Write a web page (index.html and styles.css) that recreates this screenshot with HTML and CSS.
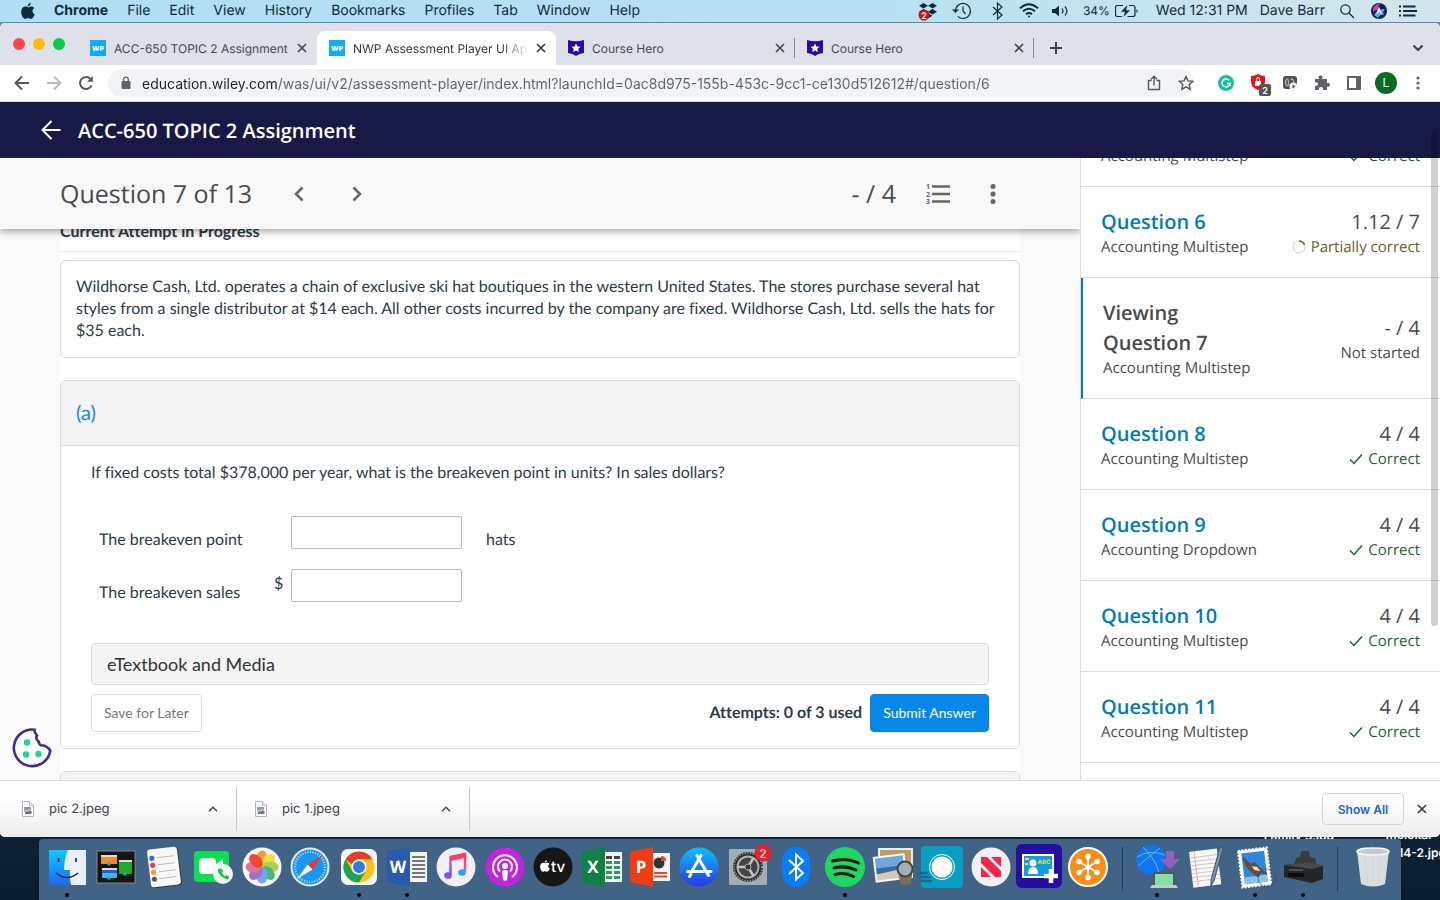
FILE: index.html
```html
<!DOCTYPE html>
<html lang="en">
  <head>
    <meta charset="utf-8">
    <title>ACC-650 TOPIC 2 Assignment</title>
    <link rel="stylesheet" href="styles.css">
  </head>
  <body>
    <!-- shared icons -->
    <svg class="sprite" aria-hidden="true">
      <symbol id="close" viewBox="0 0 10 10"><path d="M1 1l8 8M9 1l-8 8" stroke="currentColor" stroke-width="1.7" fill="none"/></symbol>
      <symbol id="check" viewBox="0 0 14 12"><path d="M1 6.5l4 4L13 1.5" stroke="currentColor" stroke-width="1.5" fill="none"/></symbol>
      <symbol id="hero" viewBox="0 0 16 16"><path fill="#2b0b9c" d="M0 0q8 2.4 16 0v13q-5 .6-8 3-3-2.400-8-3z"/><path fill="#fff" d="M8 3.600l1.400 2.800 3.100.4-2.300 2.200.6 3.100L8 10.600l-2.800 1.500.6-3.100-2.300-2.200 3.100-.4z"/></symbol>
      <symbol id="caret" viewBox="0 0 10 6"><path d="M1 5.200l4-4 4 4" stroke="currentColor" stroke-width="1.400" fill="none"/></symbol>
      <symbol id="jpeg" viewBox="0 0 12 16"><path d="M.5.500h7l4 4v11H.5z" fill="#fff" stroke="#b4b4b4"/><path d="M7.500.500v4h4" fill="#eee" stroke="#b4b4b4"/><path d="M2 6h7v5H2z" fill="#7d9ac8"/><path d="M2 9l7-1v3H2z" fill="#c9b79b"/><circle cx="8" cy="11.500" r="1.800" fill="#777"/><path d="M3 11h4v2H3z" fill="#5570a8"/></symbol>
      <symbol id="apple" viewBox="0 0 14 16"><path d="M9.700 0c.1 1.700-1.300 3.300-3 3.300C6.500 1.700 8 .1 9.700 0zM7.200 4.300c.8 0 1.600-.8 3.100-.8 1.200 0 2.300.7 3 1.600-2.600 1.500-2.200 5.200.5 6.200-.7 1.900-2.200 4.600-3.800 4.600-1.100 0-1.500-.7-2.900-.7s-1.800.7-2.900.7C2.200 15.900.2 12.300.2 9c0-3.300 2-5.400 4.200-5.400 1.200 0 2.100.7 2.800.7z" fill="currentColor"/></symbol>
    </svg>

    <div class="desktop">
      <header class="menubar">
        <nav class="menus">
          <svg class="apple" width="14" height="16"><use href="#apple"/></svg>
          <b>Chrome</b><span>File</span><span>Edit</span><span>View</span><span>History</span><span>Bookmarks</span><span>Profiles</span><span>Tab</span><span>Window</span><span>Help</span>
        </nav>
        <div class="status">
          <svg width="22" height="22" viewBox="0 0 22 22"><path d="M6.500 3l4.500 2.800-4.500 2.800L2 5.800zM15.500 3L20 5.800l-4.500 2.800L11 5.800zM15.500 9l4.500 2.800-4.500 2.800-4.500-2.800zM6.500 9l4.500 2.800-4.500 2.800L2 11.800zM11 13l4.500 2.700L11 18.500z"/><circle cx="7" cy="15" r="5.500" fill="#c3121c"/><text x="7" y="18.500" class="badge-text">2</text></svg>
          <svg width="24" height="22" viewBox="0 0 24 22" class="line"><path d="M4.500 11a7.500 7.500 0 1 1 2.200 5.300"/><path d="M12 6.500V11l2.500 3"/><path class="solid" d="M1 9.500h7L4.500 13z"/></svg>
          <svg width="20" height="22" viewBox="0 0 20 22" class="line"><path d="M6 7l9 8-4.500 4V3L15 7l-9 8"/></svg>
          <svg width="20" height="22" viewBox="0 0 20 22" class="line thick"><path d="M1 8.200q9-8 18 0M4 11.300q6-5.200 12 0M7 14.200q3-2.400 6 0"/><circle class="solid" cx="10" cy="16.500" r="1"/></svg>
          <svg width="20" height="22" viewBox="0 0 20 22" class="line"><path class="solid" d="M1 9h3l4-3.500v11L4 13H1z"/><path d="M11 8.500q2 2.500 0 5M14 6.500q3.800 4.500 0 9"/></svg>
          <span class="battery">34%<svg width="29" height="22" viewBox="0 0 29 22" class="line"><path d="M8 5.500H2.500q-2 0-2 2v7q0 2 2 2H7M14 5.500h4q2 0 2 2v7q0 2-2 2h-5.500"/><path class="solid" d="M12.500 5l-6.500 6.700h4L8.500 17l6.500-6.700h-4z"/><path class="solid" d="M21.500 9q2.500 2 0 4z"/></svg></span>
          <span>Wed 12:31 PM</span>
          <span>Dave Barr</span>
          <svg width="22" height="22" viewBox="0 0 22 22" class="line"><circle cx="8.500" cy="9.500" r="4.700"/><path d="M12 13l5 5"/></svg>
          <svg width="16" height="22" viewBox="0 0 16 22"><circle cx="8" cy="11" r="8" fill="#1b1b4b"/><path d="M2 8q3-5 9-4.500-5 1-4 7-3-1-5 1.500z" fill="#d13cb0"/><path d="M3 15q4-7 11-6-3 3-1 6-4-1-6 3z" fill="#3fb6e8"/><path d="M8 6.500l3 8-3-2.500-3 2.500z" fill="#e9f4ff"/></svg>
          <svg width="18" height="22" viewBox="0 0 18 22" class="line thick"><path d="M0 6.500h2M0 11h2M0 15.500h2M4 6.500h12.500M4 11h14M4 15.500h12.500"/></svg>
        </div>
      </header>

      <span class="file-label file-family">Family 5.jpg</span>
      <span class="file-label file-molokai">molokai-<br>04-14-2.jpg</span>

      <div class="browser">
        <div class="tabstrip">
          <div class="lights"><i class="red"></i><i class="yellow"></i><i class="green"></i></div>
          <div class="tab">
            <span class="wp">WP</span><span class="tab-title">ACC-650 TOPIC 2 Assignment</span>
            <button class="tab-close" aria-label="Close tab"><svg width="10" height="10"><use href="#close"/></svg></button>
          </div>
          <div class="tab active">
            <span class="wp">WP</span><span class="tab-title">NWP Assessment Player UI Application</span>
            <button class="tab-close" aria-label="Close tab"><svg width="10" height="10"><use href="#close"/></svg></button>
          </div>
          <div class="tab divided">
            <svg width="16" height="16"><use href="#hero"/></svg><span class="tab-title">Course Hero</span>
            <button class="tab-close" aria-label="Close tab"><svg width="10" height="10"><use href="#close"/></svg></button>
          </div>
          <div class="tab divided">
            <svg width="16" height="16"><use href="#hero"/></svg><span class="tab-title">Course Hero</span>
            <button class="tab-close" aria-label="Close tab"><svg width="10" height="10"><use href="#close"/></svg></button>
          </div>
          <button class="new-tab" aria-label="New tab"><svg width="12" height="12" viewBox="0 0 12 12"><path d="M6 0v12M0 6h12" stroke="#3c4043" stroke-width="2"/></svg></button>
          <button class="tab-search" aria-label="Search tabs"><svg width="12" height="8" viewBox="0 0 12 8"><path d="M1.500 1.500L6 6l4.500-4.500" stroke="#3c4043" stroke-width="2" fill="none"/></svg></button>
        </div>

        <div class="toolbar">
          <button aria-label="Back"><svg width="16" height="16" viewBox="0 0 16 16" class="tool"><path d="M15 8H2M8 1.500L1.500 8 8 14.500"/></svg></button>
          <button aria-label="Forward"><svg width="16" height="16" viewBox="0 0 16 16" class="tool off"><path d="M1 8h13M8 1.500L14.500 8 8 14.500"/></svg></button>
          <button aria-label="Reload"><svg width="16" height="16" viewBox="0 0 16 16" class="tool"><path d="M13.500 10.500A6 6 0 1 1 12.500 4"/><path d="M14.800 1v5.800H9z" class="fill"/></svg></button>
          <div class="omnibox">
            <svg width="12" height="14" viewBox="0 0 12 14"><path d="M2 5.500h8v7H2z" fill="#5f6368" stroke="#5f6368" stroke-linejoin="round"/><path d="M3.700 6V3.500a2.300 2.300 0 0 1 4.600 0V6" fill="none" stroke="#5f6368" stroke-width="1.300"/></svg>
            <input type="text" aria-label="Address" value="education.wiley.com/was/ui/v2/assessment-player/index.html?launchId=0ac8d975-155b-453c-9cc1-ce130d512612#/question/6">
            <button aria-label="Share"><svg width="14" height="16" viewBox="0 0 14 16" class="tool thin"><path d="M4.500 5.500h-3v9h11v-9h-3M7 10.500V1.500M4 4.300l3-3 3 3"/></svg></button>
            <button aria-label="Bookmark"><svg width="16" height="16" viewBox="0 0 16 16" class="tool thin"><path d="M8 1.500l2 4.400 4.700.5-3.500 3.200 1 4.700L8 11.900l-4.200 2.400 1-4.700L1.300 6.400 6 5.900z"/></svg></button>
          </div>
          <button aria-label="Grammarly"><svg width="16" height="16" viewBox="0 0 16 16"><circle cx="8" cy="8" r="8" fill="#15c39a"/><path d="M11 5.200A4 4 0 1 0 12 8.500H9M12 8.500v2.500" stroke="#fff" stroke-width="1.500" fill="none"/></svg></button>
          <button aria-label="Ad blocker"><svg width="26" height="26" viewBox="0 0 26 26"><path d="M6 6q4 0 7-2 3 2 7 2v6q0 5-7 8-7-3-7-8z" fill="#f40d12"/><path d="M10 11h6v5h-6z" fill="#fff"/><path d="M11.500 11V9a1.500 1.500 0 0 1 3 0v2" stroke="#fff" fill="none"/><rect x="14" y="14" width="12" height="12" rx="2" fill="#555"/><text x="20" y="23.500" class="badge-text">2</text></svg></button>
          <button aria-label="Recorder"><svg width="16" height="16" viewBox="0 0 16 16"><rect x="1" y="1" width="14" height="13" rx="3" fill="#4d4f52"/><path d="M3.500 9V6q2-4 3 0v4q-2 2-3-1M8.500 4q4 0 3 4" stroke="#aaa" stroke-width="1.500" fill="none"/><circle cx="11.500" cy="11.500" r="4" fill="#f5f5f5"/><path d="M10.500 9.500l3 2-3 2z" fill="#555"/></svg></button>
          <button aria-label="Extensions"><svg width="16" height="16" viewBox="0 0 16 16"><path d="M1 4h4q-1.500-3.500 1.500-3.500T8.200 4H13v4q3-.8 3 1.700T13 11.500V15H9q.5-3-2-3t-2 3H1v-4q3 .4 3-1.900T1 7.500z" fill="#5f6368"/></svg></button>
          <button aria-label="Side panel"><svg width="14" height="14" viewBox="0 0 14 14"><path d="M1 1h12v12H1z" fill="none" stroke="#5f6368" stroke-width="2"/><path d="M9 1h4v12H9z" fill="#5f6368"/></svg></button>
          <button aria-label="Profile"><span class="avatar">L</span></button>
          <button aria-label="Menu"><svg width="4" height="14" viewBox="0 0 4 14" fill="#5f6368"><circle cx="2" cy="2" r="1.600"/><circle cx="2" cy="7" r="1.600"/><circle cx="2" cy="12" r="1.600"/></svg></button>
        </div>

        <div class="app">
          <header class="app-header">
            <a href="#" aria-label="Back to course"><svg width="20" height="20" viewBox="0 0 20 20"><path d="M19.500 10H2M10.500 1L1.500 10l9 9" stroke="#fff" stroke-width="2" fill="none"/></svg></a>
            <h1>ACC-650 TOPIC 2 Assignment</h1>
          </header>
          <div class="scrollbar"></div>

          <div class="player">
            <main>
              <div class="question-bar">
                <h2>Question 7 of 13</h2>
                <button aria-label="Previous question"><svg width="10" height="16" viewBox="0 0 10 16"><path d="M8.500 1.500L2 8l6.500 6.500"/></svg></button>
                <button aria-label="Next question"><svg width="10" height="16" viewBox="0 0 10 16"><path d="M1.500 1.500L8 8l-6.500 6.500"/></svg></button>
                <span class="points">- / 4</span>
                <button aria-label="Question list"><svg width="26" height="24" viewBox="0 0 26 24"><path d="M7 4.500h18M7 12h18M7 19.500h18"/><g class="digits"><text x="1" y="7">1</text><text x="1" y="15">2</text><text x="1" y="22">3</text></g></svg></button>
                <button aria-label="More options"><svg width="6" height="22" viewBox="0 0 6 22" class="dots"><circle cx="3" cy="3.500" r="2.500"/><circle cx="3" cy="11" r="2.500"/><circle cx="3" cy="18.500" r="2.500"/></svg></button>
              </div>

              <div class="content">
                <h3>Current Attempt in Progress</h3>
                <div class="card prompt">Wildhorse Cash, Ltd. operates a chain of exclusive ski hat boutiques in the western United States. The stores purchase several hat styles from a single distributor at $14 each. All other costs incurred by the company are fixed. Wildhorse Cash, Ltd. sells the hats for $35 each.</div>
                <section class="card">
                  <div class="part-title">(a)</div>
                  <div class="part-body">
                    <p>If fixed costs total $378,000 per year, what is the breakeven point in units? In sales dollars?</p>
                    <div class="answers">
                      <label for="units">The breakeven point</label><span></span>
                      <input id="units" type="text"><span class="unit">hats</span>
                      <label for="sales">The breakeven sales</label><span class="dollar">$</span>
                      <input id="sales" type="text">
                    </div>
                    <button class="etext">eTextbook and Media</button>
                    <div class="actions">
                      <button class="save">Save for Later</button>
                      <span>Attempts: 0 of 3 used</span>
                      <button class="submit">Submit Answer</button>
                    </div>
                  </div>
                </section>
                <section class="card"><div class="part-title"></div></section>
              </div>
              <button class="cookie" aria-label="Cookie settings"><svg width="40" height="40" viewBox="0 0 40 40"><path d="M22.500 1.700A18.300 18.300 0 1 0 38.300 22.500Q35 18 31 17.500q-3.500.5-4.500-4-3.500-3-1.500-6-3-3-2.500-5.800z" fill="#fff" stroke="#472d83" stroke-width="2.600"/><g fill="#15d995"><circle cx="15" cy="14.500" r="3.200"/><circle cx="14" cy="26.500" r="3.200"/><circle cx="26.500" cy="26" r="3.200"/></g></svg></button>
            </main>

            <aside>
              <ul>
                <li><div><a href="#">Question 5</a><small>Accounting Multistep</small></div><div class="score">4 / 4<small class="correct"><svg width="14" height="12"><use href="#check"/></svg>Correct</small></div></li>
                <li><div><a href="#">Question 6</a><small>Accounting Multistep</small></div><div class="score">1.12 / 7<small class="partial"><svg width="14" height="14" viewBox="0 0 14 14"><circle cx="7" cy="7" r="6" fill="none" stroke="#d6d0b8"/><path d="M7 1a6 6 0 0 1 5.500 4" fill="none" stroke="#7a6428" stroke-width="1.500"/></svg>Partially correct</small></div></li>
                <li class="current"><div><strong>Viewing<br>Question 7</strong><small>Accounting Multistep</small></div><div class="score">- / 4<small>Not started</small></div></li>
                <li><div><a href="#">Question 8</a><small>Accounting Multistep</small></div><div class="score">4 / 4<small class="correct"><svg width="14" height="12"><use href="#check"/></svg>Correct</small></div></li>
                <li><div><a href="#">Question 9</a><small>Accounting Dropdown</small></div><div class="score">4 / 4<small class="correct"><svg width="14" height="12"><use href="#check"/></svg>Correct</small></div></li>
                <li><div><a href="#">Question 10</a><small>Accounting Multistep</small></div><div class="score">4 / 4<small class="correct"><svg width="14" height="12"><use href="#check"/></svg>Correct</small></div></li>
                <li><div><a href="#">Question 11</a><small>Accounting Multistep</small></div><div class="score">4 / 4<small class="correct"><svg width="14" height="12"><use href="#check"/></svg>Correct</small></div></li>
              </ul>
            </aside>
          </div>
        </div>

        <div class="downloads">
          <div class="download"><svg width="12" height="16"><use href="#jpeg"/></svg><span>pic 2.jpeg</span><button aria-label="Options for pic 2.jpeg"><svg width="10" height="6"><use href="#caret"/></svg></button></div>
          <div class="download"><svg width="12" height="16"><use href="#jpeg"/></svg><span>pic 1.jpeg</span><button aria-label="Options for pic 1.jpeg"><svg width="10" height="6"><use href="#caret"/></svg></button></div>
          <button class="show-all">Show All</button>
          <button class="shelf-close" aria-label="Close"><svg width="10" height="10"><use href="#close"/></svg></button>
        </div>
      </div>

      <footer class="dock">
        <!-- Finder -->
        <div class="dock-item running"><svg viewBox="0 0 48 48"><defs><linearGradient id="finder" x2="0" y2="1"><stop stop-color="#12c8fb"/><stop offset="1" stop-color="#1a6bf5"/></linearGradient></defs><path d="M6 7h37v35H6z" fill="#e9f0f8"/><path d="M6 7h19q-4 9-4 20h6q-1 7 1 15H6z" fill="url(#finder)"/><path d="M15.500 15v4M33 15v4M13 30q11 9 22 0" stroke="#132238" stroke-width="1.600" fill="none"/></svg></div>
        <!-- Mission Control -->
        <div class="dock-item"><svg viewBox="0 0 48 48"><path d="M5 8h38v32H5z" fill="#151515" stroke="#888"/><path d="M9 12h16v9H9z" fill="#f18a2b"/><path d="M27 17h13v14H27z" fill="#1eab2c"/><path d="M10 25h15v10H10z" fill="#3c50d8"/><path d="M10 30h15v5H10z" fill="#35c0d8"/><path d="M9 12h16v2H9zM27 17h13v2H27zM10 25h15v2H10z" fill="#ddd"/><g fill="#2c9bf0"><circle cx="17" cy="21" r="1.800"/><circle cx="33" cy="31" r="1.800"/><circle cx="17" cy="35" r="1.800"/></g></svg></div>
        <!-- Reminders -->
        <div class="dock-item"><svg viewBox="0 0 48 48"><g transform="rotate(-7 24 24)"><rect x="10" y="6" width="30" height="38" rx="3" fill="#333"/><rect x="9" y="5" width="30" height="38" rx="3" fill="#f8f8f8"/><path d="M18 14h17M18 21h17M18 28h17M18 35h17" stroke="#bbb"/><circle cx="13" cy="14" r="2.600" fill="#2d65e8"/><circle cx="13" cy="21" r="2.600" fill="#f3392f"/><circle cx="13" cy="28" r="2.600" fill="#f99a1c"/><circle cx="13" cy="35" r="2.600" fill="#555d66"/></g></svg></div>
        <!-- FaceTime -->
        <div class="dock-item"><svg viewBox="0 0 48 48"><rect x="5" y="8" width="35" height="31" rx="4" fill="#0be052"/><rect x="10" y="15" width="17" height="16" rx="4" fill="#fff"/><path d="M27 21l7-5v14l-7-5z" fill="#fff"/><circle cx="34" cy="31" r="10" fill="#f3f3f3"/><path d="M29 26q-1 3 3 7t7 3l1.500-2-3-2-1.500 1.200q-2-1-3-3.200l1.200-1.500-2-3z" fill="#0fc84b"/></svg></div>
        <!-- Photos -->
        <div class="dock-item"><svg viewBox="0 0 48 48"><circle cx="24" cy="24" r="19.500" fill="#f6f6f6"/><g opacity=".9"><ellipse cx="24" cy="15.500" rx="5.500" ry="8" fill="#f8931b"/><ellipse cx="24" cy="15.500" rx="5.500" ry="8" fill="#efe223" transform="rotate(45 24 24)"/><ellipse cx="24" cy="15.500" rx="5.500" ry="8" fill="#a0cc40" transform="rotate(90 24 24)"/><ellipse cx="24" cy="15.500" rx="5.500" ry="8" fill="#3cb070" transform="rotate(135 24 24)"/><ellipse cx="24" cy="15.500" rx="5.500" ry="8" fill="#60a0e4" transform="rotate(180 24 24)"/><ellipse cx="24" cy="15.500" rx="5.500" ry="8" fill="#9068c4" transform="rotate(225 24 24)"/><ellipse cx="24" cy="15.500" rx="5.500" ry="8" fill="#dd6590" transform="rotate(270 24 24)"/><ellipse cx="24" cy="15.500" rx="5.500" ry="8" fill="#f0391d" transform="rotate(315 24 24)"/></g></svg></div>
        <!-- Safari -->
        <div class="dock-item"><svg viewBox="0 0 48 48"><circle cx="24" cy="24" r="19.500" fill="#eee"/><circle cx="24" cy="24" r="17.500" fill="#1b95f0"/><circle cx="24" cy="24" r="15" fill="none" stroke="#b8e2ff" stroke-width="2.500" stroke-dasharray="1 1.600"/><path d="M37 12L21.500 21.500l5 5z" fill="#f0352e"/><path d="M11 36l10.500-14.500 5 5z" fill="#f5f5f5"/></svg></div>
        <!-- Chrome -->
        <div class="dock-item running"><svg viewBox="0 0 48 48"><rect x="6" y="6" width="36" height="36" rx="7" fill="#f7f7f7"/><circle cx="24" cy="24" r="15.500" fill="#fbc116"/><path d="M10.600 16.200A15.500 15.500 0 0 1 37.400 16.200H24q-5 0-7 5z" fill="#e33b2e"/><path d="M10.600 16.200A15.500 15.500 0 0 0 24 39.500l6.800-11.600q-3.500 4-8 3.800-4.800-.8-6.300-5.200z" fill="#1da453"/><circle cx="24" cy="24" r="7.600" fill="#fff"/><circle cx="24" cy="24" r="6" fill="#3478e8"/></svg></div>
        <!-- Word -->
        <div class="dock-item running"><svg viewBox="0 0 48 48"><path d="M25 9h19v30H25z" fill="#f4f4f4"/><path d="M29 14h13M29 18h13M29 22h13M29 26h13M29 30h13M29 34h13" stroke="#454d5a" stroke-width="1.500"/><path d="M4 8.500L27 4v40L4 39z" fill="#2b59ad"/><text x="15" y="30" class="office">W</text></svg></div>
        <!-- Music -->
        <div class="dock-item"><svg viewBox="0 0 48 48"><defs><linearGradient id="music" x1="1" x2="0" y2="1"><stop stop-color="#fb3b54"/><stop offset=".5" stop-color="#e859b5"/><stop offset="1" stop-color="#5c69f5"/></linearGradient></defs><circle cx="24" cy="24" r="19.500" fill="#f0f0f3"/><path d="M18.500 32V14L33 11v18.500" fill="none" stroke="url(#music)" stroke-width="2.500"/><path d="M18.500 13L33 10v5l-14.500 3z" fill="#f43f68"/><ellipse cx="16" cy="32.500" rx="3.800" ry="3.200" fill="#7a53ee"/><ellipse cx="30" cy="29.500" rx="3.800" ry="3.200" fill="#2aa5f5"/></svg></div>
        <!-- Podcasts -->
        <div class="dock-item"><svg viewBox="0 0 48 48"><circle cx="24" cy="24" r="19.500" fill="#c223dc"/><g fill="none" stroke="#fff" stroke-width="2"><path d="M17 34a12 12 0 1 1 14 0"/><path d="M19 28.500a7 7 0 1 1 10 0"/></g><circle cx="24" cy="23" r="3" fill="#fff"/><path d="M21 28q3-2 6 0l-1 9q-2 2-4 0z" fill="#fff"/></svg></div>
        <!-- Apple TV -->
        <div class="dock-item"><svg viewBox="0 0 48 48"><circle cx="24" cy="24" r="19.500" fill="#161616"/><svg x="11" y="17" width="10" height="12" color="#fff"><use href="#apple"/></svg><text x="29" y="29" class="tv">tv</text></svg></div>
        <!-- Excel -->
        <div class="dock-item"><svg viewBox="0 0 48 48"><path d="M25 9h19v30H25z" fill="#f4f4f4"/><path d="M28 13h6v3h-6zM36 13h6v3h-6z" fill="#444"/><path d="M28 18h6v3h-6zM36 18h6v3h-6zM28 23h6v3h-6zM36 23h6v3h-6zM28 28h6v3h-6zM36 28h6v3h-6zM28 33h6v3h-6zM36 33h6v3h-6z" fill="#2a9a66"/><path d="M4 8.500L27 4v40L4 39z" fill="#128044"/><text x="15" y="30" class="office">X</text></svg></div>
        <!-- PowerPoint -->
        <div class="dock-item"><svg viewBox="0 0 48 48"><path d="M25 10h19v28H25z" fill="#f4f4f4"/><circle cx="33" cy="20" r="5.500" fill="#333"/><path d="M35 18v-5q5 0 5 5z" fill="#e8452a"/><path d="M28 30h13M28 33.500h13" stroke="#e8452a" stroke-width="1.800"/><path d="M4 8.500L27 4v40L4 39z" fill="#f03b13"/><text x="15" y="30" class="office">P</text></svg></div>
        <!-- App Store -->
        <div class="dock-item"><svg viewBox="0 0 48 48"><defs><linearGradient id="store" x2="0" y2="1"><stop stop-color="#0fc0fd"/><stop offset="1" stop-color="#2438e8"/></linearGradient></defs><circle cx="24" cy="24" r="19.500" fill="url(#store)"/><path d="M26 12.500L17 28M22 12.500l11.500 20M12.500 28.500h16M32 28.500h4M16 31l-1.500 2.500" stroke="#fff" stroke-width="3" stroke-linecap="round"/></svg></div>
        <!-- System Preferences -->
        <div class="dock-item"><svg viewBox="0 0 48 48"><rect x="5" y="6" width="38" height="36" rx="1" fill="#a4adb3"/><circle cx="24" cy="24" r="15" fill="#2c2d2e"/><circle cx="24" cy="24" r="14" fill="none" stroke="#9a9a9a" stroke-width="2" stroke-dasharray="1.200 1.500"/><circle cx="24" cy="24" r="10.500" fill="#444" stroke="#b0b0b0" stroke-width="2"/><path d="M24 24L13.500 24M24 24l5.500-9M24 24l5.500 9" stroke="#c4c4c4" stroke-width="2.500"/><circle cx="24" cy="24" r="3" fill="#333" stroke="#aaa"/><circle cx="39" cy="10" r="8.500" fill="#e8222a"/><text x="39" y="14.500" class="badge-big">2</text></svg></div>
        <!-- Bluetooth -->
        <div class="dock-item"><svg viewBox="0 0 48 48"><rect x="10" y="4" width="28" height="40" rx="14" fill="#087df5"/><path d="M17 17l14 13-7 6.500v-25l7 6.500-14 13" fill="none" stroke="#fff" stroke-width="2"/></svg></div>
        <!-- Spotify -->
        <div class="dock-item running"><svg viewBox="0 0 48 48"><circle cx="24" cy="24" r="20" fill="#1ed760"/><path d="M11.500 18q13-4 26 2M13 25q11-3 22 2M14 31.500q10-2.500 18.500 2" stroke="#161616" stroke-width="3" stroke-linecap="round" fill="none"/></svg></div>
        <!-- Preview -->
        <div class="dock-item"><svg viewBox="0 0 48 48"><path d="M10 6h33v28H10z" fill="#c19b5d" stroke="#eee" stroke-width="2"/><g transform="rotate(-7 20 24)"><path d="M5 12h32v26H5z" fill="#f5f5f5"/><path d="M7 14h28v11H7z" fill="#6fa6dd"/><path d="M7 24h28v6H7z" fill="#376f9d"/><path d="M7 30l28-3v9H7z" fill="#d5c8b1"/></g><path d="M29 25h15l-2 15q-6 4-11 0z" fill="#7f6c54"/><circle cx="36" cy="26" r="7.500" fill="#a2afb3" stroke="#454545" stroke-width="2"/></svg></div>
        <!-- Screen recorder -->
        <div class="dock-item"><svg viewBox="0 0 48 48"><rect x="3" y="3" width="42" height="42" rx="4" fill="#069fc1"/><circle cx="24" cy="24" r="10.500" fill="#fff"/><circle cx="24" cy="24" r="12.500" fill="none" stroke="#fff"/><path d="M1 30h8M3 34h8M4 38h9" stroke="#17698d" stroke-width="2.500" stroke-linecap="round"/></svg></div>
        <!-- News -->
        <div class="dock-item"><svg viewBox="0 0 48 48"><circle cx="24" cy="24" r="19.500" fill="#f1f1f3"/><path d="M14 14h6l14 14v6h-6L14 20z" fill="#f4244d"/><path d="M24 14h10v10zM14 24v10h10z" fill="#f4244d"/></svg></div>
        <!-- Flash cards -->
        <div class="dock-item"><svg viewBox="0 0 48 48"><rect x="1" y="1" width="46" height="44" rx="6" fill="#250f9e"/><path d="M8 12h30v22H8z" fill="#0e9ce5" stroke="#fff" stroke-width="2"/><circle cx="18" cy="20" r="3.500" fill="#fff"/><path d="M13 31q0-7 5-7t5 7z" fill="#fff"/><path d="M10 15h4v2h-4zM10 20h3v2h-3z" fill="#f7df20"/><text x="29" y="21" class="abc">ABC</text><path d="M36 26v14M29 33h14" stroke="#fff" stroke-width="4.500"/></svg></div>
        <!-- GoTo -->
        <div class="dock-item"><svg viewBox="0 0 48 48"><circle cx="24" cy="24" r="19" fill="#fa8d12" stroke="#fff" stroke-width="2"/><path d="M24 13v22M14.500 18.500l19 11M14.500 29.500l19-11" stroke="#fff" stroke-width="2"/><g fill="#fff"><circle cx="24" cy="24" r="2.500"/><circle cx="24" cy="13.500" r="2.800"/><circle cx="24" cy="34.500" r="2.800"/><circle cx="15" cy="18.500" r="2.800"/><circle cx="33" cy="18.500" r="2.800"/><circle cx="15" cy="29.500" r="2.800"/><circle cx="33" cy="29.500" r="2.800"/></g></svg></div>
        <div class="dock-divider"></div>
        <!-- Downloader -->
        <div class="dock-item running"><svg viewBox="0 0 48 48"><circle cx="18" cy="17" r="15" fill="#1275eb"/><path d="M4 14q12-8 28-2M5 23q14-12 22-18M10 4q12 12 16 25" stroke="#67c6ff" stroke-width=".8" fill="none"/><path d="M33 8h8v8h6L37 26 27 16h6z" fill="#9460be"/><path d="M20 29h22v15H20z" fill="#555"/><path d="M22 31h18v11H22z" fill="#7ee3a4"/><path d="M19 42h24l2 3H17z" fill="#c8c8c8"/></svg></div>
        <!-- TextEdit -->
        <div class="dock-item"><svg viewBox="0 0 48 48"><g transform="rotate(-7 24 24)"><path d="M9 7h28v36H9z" fill="#f8f8f6"/><path d="M9 13h28M9 17h28M9 21h28M9 25h28M9 29h28M9 33h28M9 37h28" stroke="#c5c9ce"/><path d="M14 7v36" stroke="#f0a8a8"/></g><path d="M38 4l3 1-9 33-3 5v-6z" fill="#7894ad" stroke="#3c5266"/></svg></div>
        <!-- Mail -->
        <div class="dock-item running"><svg viewBox="0 0 48 48"><g transform="rotate(-7 24 24)"><path d="M9 6h29v37H9z" fill="#fff" stroke="#fff" stroke-width="2" stroke-dasharray="2 1.500"/><path d="M12 9h23v31H12z" fill="#2e87da"/><path d="M12 33h23v7H12z" fill="#8dc2ec"/><path d="M13 12l8 9q1-3 4-1l7 9q3 0 3 4l-6-2-3 4-6-6q-7-7-7-17z" fill="#6a4b30"/><path d="M21 23l5 1 3 5-6-2z" fill="#e9dfc8"/></g><circle cx="36" cy="35" r="9" fill="none" stroke="#2b4c70" opacity=".6"/></svg></div>
        <!-- Printer -->
        <div class="dock-item running"><svg viewBox="0 0 48 48"><path d="M17 15l4-1 1-6h8l1 6 5 1 2 9H15z" fill="#3a3b3c"/><path d="M5 22l25-3 14 4v13l-11 4-28-6z" fill="#252627"/><path d="M5 22l25-3 14 4-11 3z" fill="#48494a"/><path d="M9 30h16v4H9z" fill="#0c0c0c"/><path d="M10 27h14" stroke="#777"/></svg></div>
        <div class="dock-divider"></div>
        <!-- Trash -->
        <div class="dock-item"><svg viewBox="0 0 48 48"><path d="M8 8h32l-4 33q-12 5-24 0z" fill="#d9dde0"/><path d="M16 12l3 30M24 12v31M32 12l-3 30" stroke="#d0d5d8"/><ellipse cx="24" cy="8.500" rx="16" ry="3.500" fill="#c3c9cd" stroke="#f5f5f5" stroke-width="1.500"/></svg></div>
      </footer>
    </div>
  </body>
</html>
```

FILE: styles.css
```css
* {
  box-sizing: border-box;
}

body {
  margin: 0;
  font-family: Inter, "Liberation Sans", sans-serif;
  font-size: 14px;
  text-rendering: geometricPrecision;
}

h1, h2, h3, p, ul {
  margin: 0;
  padding: 0;
}

button {
  font: inherit;
  padding: 0;
  border: 0;
  background: none;
  color: inherit;
  display: flex;
  align-items: center;
  justify-content: center;
  cursor: pointer;
}

a {
  text-decoration: none;
}

svg {
  flex: none;
}

.sprite {
  position: absolute;
  width: 0;
  height: 0;
}

.desktop {
  position: relative;
  height: 100vh;
  overflow: hidden;
  display: flex;
  flex-direction: column;
  background: linear-gradient(#2f6797, #6c97b4 30px, #0d2438 800px, #0a1d30);
}

/* macOS menu bar */
.menubar {
  height: 22px;
  margin-bottom: 1px;
  display: flex;
  justify-content: space-between;
  align-items: center;
  color: #0d2c3e;
  fill: #0d2c3e;
  line-height: 22px;
  background: linear-gradient(90deg, #b0def2, #b8e0f2 60%, #d3e5ec);
}

.menus, .status {
  display: flex;
  align-items: center;
}

.menus {
  gap: 19px;
  padding-left: 21px;
}

.status {
  gap: 12px;
  padding-right: 23px;
}

.battery {
  display: flex;
  align-items: center;
  gap: 5px;
  font-size: 12px;
}

.line {
  fill: none;
  stroke: #0d2c3e;
  stroke-width: 1.2;
}

.thick {
  stroke-width: 2;
}

.solid {
  fill: #0d2c3e;
  stroke: none;
}

.badge-text, .badge-big, .office, .tv, .abc {
  fill: #fff;
  font-size: 9px;
  font-weight: 600;
  text-anchor: middle;
}

.file-label {
  position: absolute;
  color: #fff;
  font-size: 12px;
  font-weight: 600;
  line-height: 18px;
  text-align: center;
}

.file-family {
  right: 106px;
  bottom: 55px;
}

.file-molokai {
  right: -6px;
  bottom: 38px;
}

/* browser window */
.browser {
  position: relative;
  flex: 1;
  min-height: 0;
  display: flex;
  flex-direction: column;
  border-radius: 5px;
  overflow: hidden;
  background: #fff;
}

.tabstrip {
  height: 42px;
  padding-top: 8px;
  display: flex;
  background: #dee1e9;
  font-size: 12px;
  color: #45494d;
}

.lights {
  width: 78px;
  padding: 7px 13px;
  display: flex;
  gap: 8px;
}

.lights i {
  width: 12px;
  height: 12px;
  border-radius: 50%;
}

.red { background: #fc4648; }
.yellow { background: #fdbc05; }
.green { background: #0acb44; }

.tab {
  position: relative;
  flex: 0 1 239px;
  min-width: 0;
  display: flex;
  align-items: center;
  gap: 8px;
  padding: 0 10px 0 12px;
}

.tab.active {
  background: #fff;
  border-radius: 8px 8px 0 0;
  color: #35363a;
}

.divided::after {
  content: "";
  position: absolute;
  right: 0;
  top: 7px;
  width: 1px;
  height: 20px;
  background: #85888d;
}

.wp {
  width: 16px;
  height: 16px;
  background: #0cacf9;
  color: #fff;
  font-size: 7px;
  font-weight: 800;
  line-height: 17px;
  text-align: center;
}

.tab-title {
  flex: 1;
  overflow: hidden;
  white-space: nowrap;
}

.active .tab-title {
  -webkit-mask-image: linear-gradient(90deg, #000 85%, transparent);
}

.new-tab {
  width: 43px;
}

.tab-search {
  width: 44px;
  margin-left: auto;
}

.toolbar {
  height: 37px;
  padding: 0 6px;
  display: flex;
  align-items: center;
  border-bottom: 1px solid #d8dadd;
}

.toolbar button {
  width: 32px;
  height: 28px;
  flex: none;
}

.tool {
  fill: none;
  stroke: #54585d;
  stroke-width: 2;
}

.tool .fill {
  fill: #54585d;
  stroke: none;
}

.thin {
  stroke-width: 1.4;
}

.off {
  stroke: #b8babd;
}

.omnibox {
  flex: 1;
  height: 28px;
  margin: 0 16px 0 6px;
  padding-left: 12px;
  display: flex;
  align-items: center;
  border-radius: 14px;
  background: #f1f3f4;
}

.omnibox button {
  width: 16px;
}

.omnibox button:last-child {
  margin-left: 16px;
}

/* host part is darker than the path */
.omnibox input {
  flex: 1;
  min-width: 0;
  border: 0;
  padding: 0;
  margin-left: 10px;
  outline: none;
  font: inherit;
  color: transparent;
  background: linear-gradient(90deg, #202124 135px, #5f6368 135px);
  -webkit-background-clip: text;
}

.avatar {
  width: 22px;
  height: 22px;
  border-radius: 50%;
  background: #0b6b1f;
  color: #fff;
  font-size: 12px;
  line-height: 22px;
}

/* assessment player */
.app {
  position: relative;
  flex: 1;
  min-height: 0;
  display: flex;
  flex-direction: column;
  font-family: "Open Sans", "Noto Sans", sans-serif;
}

.app-header {
  flex: none;
  height: 56px;
  padding-left: 41px;
  display: flex;
  align-items: center;
  gap: 17px;
  background: #171a45;
  color: #fff;
}

.app-header a {
  display: flex;
}

.app-header h1 {
  font-size: 20px;
  font-weight: 600;
}

.scrollbar {
  position: absolute;
  z-index: 2;
  right: 2px;
  top: 29px;
  width: 7px;
  height: 495px;
  border-radius: 4px;
  background: rgba(0, 0, 0, .18);
}

.player {
  flex: 1;
  min-height: 0;
  display: flex;
  overflow: hidden;
}

main {
  position: relative;
  flex: 1;
  min-width: 0;
  overflow: hidden;
  background: #fafafa;
}

.question-bar {
  position: relative;
  z-index: 1;
  height: 71px;
  padding: 0 60px;
  display: flex;
  align-items: center;
  background: #f8f8f8;
  box-shadow: 0 2px 8px rgba(0, 0, 0, .4);
  color: #4a4a4a;
}

.question-bar h2 {
  margin-right: 18px;
  font-size: 25px;
  font-weight: 400;
}

.question-bar button {
  width: 58px;
  height: 40px;
}

.question-bar svg {
  fill: none;
  stroke: #666;
  stroke-width: 2.5;
}

.question-bar .dots, .digits {
  fill: #666;
  stroke: none;
}

.digits {
  font-size: 7px;
  font-weight: 700;
}

.points {
  margin-left: auto;
  margin-right: 14px;
  font-size: 25px;
}

.question-bar .points ~ button {
  width: 55px;
}

/* the page is scrolled so its heading slides under the bar */
.content {
  margin: -10px 60px 0;
  background: #fff;
  color: #2d3b45;
  font-family: Lato, sans-serif;
  font-size: 16px;
  font-variant-ligatures: none;
  line-height: 22px;
}

.content h3 {
  padding: 2px 0 8px;
  margin-bottom: 8px;
  border-bottom: 1px solid #ebebeb;
  font-size: 16px;
  font-weight: 700;
}

.card {
  margin-bottom: 22px;
  border: 1px solid #dcdcdc;
  border-radius: 5px;
  background: #fff;
}

.prompt {
  padding: 15px;
}

.part-title {
  min-height: 65px;
  padding: 21px 15px;
  border-bottom: 1px solid #dcdcdc;
  background: #f4f4f4;
  color: #0d8ce8;
  font-size: 20px;
}

.part-body {
  padding: 16px 30px;
}

.answers {
  margin: 32px 8px 39px;
  display: grid;
  grid-template-columns: 175px 17px 171px auto;
  grid-auto-rows: 35px;
  row-gap: 18px;
}

.answers label, .unit {
  align-self: end;
}

.unit {
  padding-left: 24px;
}

.dollar {
  line-height: 30px;
}

.answers input {
  height: 33px;
  border: 1px solid #bbb;
  border-radius: 2px;
  font: inherit;
}

.etext {
  width: 100%;
  height: 42px;
  padding: 0 15px;
  justify-content: flex-start;
  border: 1px solid #dcdcdc;
  border-radius: 4px;
  background: #f4f4f4;
  color: #333;
  font-size: 18px;
}

.actions {
  margin-top: 9px;
  display: flex;
  align-items: center;
  gap: 8px;
}

.actions span {
  margin-left: auto;
  font-weight: 700;
}

.save, .submit {
  height: 38px;
  padding: 0 12px;
  border: 1px solid #dcdcdc;
  border-radius: 4px;
  color: #777;
  font-size: 14px;
}

.submit {
  border-color: #0782e0;
  background: #0788e8;
  color: #fff;
}

.cookie {
  position: absolute;
  left: 12px;
  bottom: 12px;
}

aside {
  width: 25%;
  overflow: hidden;
  border-left: 1px solid #dcdcdc;
  background: #fff;
  color: #4a4a4a;
}

/* scrolled part of the way through the first question */
aside ul {
  margin-top: -62px;
  list-style: none;
}

aside li {
  display: flex;
  align-items: center;
  justify-content: space-between;
  padding: 20px;
  border-bottom: 1px solid #dcdcdc;
  font-size: 20px;
  line-height: 30px;
}

aside li.current {
  border-left: 2px solid #007cb8;
}

aside a, aside strong {
  font-weight: 600;
}

aside a {
  color: #007cb8;
}

aside small {
  display: block;
  font-size: 15px;
  line-height: 20px;
}

.score {
  text-align: right;
}

.score small {
  display: flex;
  align-items: center;
  justify-content: flex-end;
  gap: 5px;
}

.correct { color: #1e6130; }
.partial { color: #6f5b22; }

/* downloads shelf */
.downloads {
  height: 57px;
  display: flex;
  align-items: center;
  border-top: 1px solid #dcdcdc;
  background: linear-gradient(#fff 30%, #ececec);
  color: #3c4043;
  font-size: 13px;
}

.download {
  width: 233px;
  height: 44px;
  padding: 0 10px 0 18px;
  display: flex;
  align-items: center;
  border-right: 1px solid #c8c8c8;
}

.download:first-child {
  width: 237px;
  padding-left: 22px;
}

.download span {
  flex: 1;
  margin-left: 15px;
}

.download button {
  width: 26px;
  height: 26px;
}

.show-all {
  width: 82px;
  height: 32px;
  margin-left: auto;
  border: 1px solid #d3d5d9;
  border-radius: 4px;
  color: #1a62e0;
  font-size: 12px;
  font-weight: 600;
}

.shelf-close {
  width: 36px;
  height: 36px;
}

/* dock */
.dock {
  position: relative;
  height: 61px;
  margin: 2px 39px 0;
  padding: 0 4px;
  display: flex;
  border-radius: 4px 4px 0 0;
  background: #416385;
}

.dock-item {
  flex: 1;
  padding-top: 4px;
  display: flex;
  flex-direction: column;
  align-items: center;
  gap: 2px;
}

.dock-item > svg {
  width: 48px;
  height: 48px;
}

.running::after {
  content: "";
  width: 4px;
  height: 4px;
  border-radius: 50%;
  background: #000;
}

.dock-divider {
  width: 1px;
  height: 44px;
  margin: 8px 10px 0;
  background: #213f5c;
}

.badge-big {
  font-size: 12px;
  font-weight: 400;
}

.office {
  font-family: "Open Sans", sans-serif;
  font-size: 17px;
  font-weight: 700;
}

.tv {
  font-size: 15px;
  font-weight: 500;
}

.abc {
  font-size: 6px;
  font-weight: 700;
  fill: #f7df20;
}
```
